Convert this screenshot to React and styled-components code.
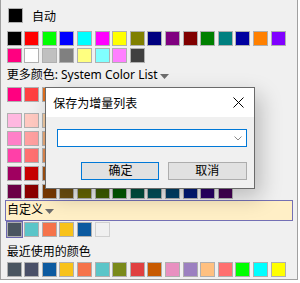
import React from 'react';
import styled, { createGlobalStyle } from 'styled-components';

const GlobalStyle = createGlobalStyle`
  html, body {
    margin: 0;
    padding: 0;
    background: #ffffff;
  }
  body {
    font-family: "Noto Sans", "Noto Sans CJK SC", sans-serif;
    font-size: 12px;
    color: #000;
  }
`;

// palette data
const standard = [
  '#000000', '#ff0000', '#00ff00', '#0000ff', '#00ffff', '#ff00ff', '#ffff00', '#808000',
  '#000080', '#800080', '#800000', '#008000', '#008080', '#0000a0', '#ff8000', '#8000ff',
  '#ff0080', '#ffffff', '#c0c0c0', '#808080', '#ffff80', '#80ffff', '#ff80ff', '#404040',
];

const baseRow = [
  '#ff0080', '#ff4040', '#e07020', '#c8a000', '#a0a000', '#60a000', '#00a000',
  '#00a070', '#00a0a0', '#0070c0', '#0000c0', '#6000c0', '#a000a0',
];

const shadeRows = [
  ['#ffb8e0', '#ffc8c0', '#f0c8a0', '#f0e0a0', '#f0f0a0', '#d0f0a0', '#b0f0b0', '#a0f0d8', '#a0f0f0', '#a0d0f0', '#a0a0f0', '#d0a0f0', '#f0a0f0'],
  ['#ff80c8', '#ffa0a0', '#e8a878', '#e8c870', '#e0e070', '#b0e070', '#80e080', '#70e0b8', '#70e0e0', '#70b0e0', '#7070e0', '#b070e0', '#e070e0'],
  ['#ff40a8', '#ff7070', '#e08850', '#e0b040', '#d0d040', '#90d040', '#40d040', '#40d098', '#40d0d0', '#4090d0', '#4040d0', '#9040d0', '#d040d0'],
  ['#a00060', '#c80000', '#a05010', '#907010', '#808000', '#508000', '#008000', '#007050', '#007078', '#005090', '#002090', '#400090', '#600070'],
  ['#6b0046', '#8b0000', '#7a3800', '#6e5010', '#686800', '#3e5e00', '#005a00', '#005040', '#00505a', '#004068', '#001a78', '#2a0068', '#440055'],
];

const custom = ['#4a5560', '#5bc5c8', '#f5734a', '#f8c21a', '#0c5aa0'];

const recent = [
  '#4a5560', '#4a5068', '#0c5aa0', '#f8c21a', '#f5734a', '#5bc5c8', '#7a8a1a', '#e04040',
  '#c85a00', '#e890c0', '#9c80c0', '#ffc080', '#ff7070', '#00ff00', '#00ffff', '#ffff00',
];

const Panel = styled.div`
  position: relative;
  box-sizing: border-box;
  width: 298px;
  height: 280px;
  background: #f0f0f0;
  border: 1px solid #a0a0a0;
  border-top: none;
  padding: 0 0 0 5.7px;
  overflow: hidden;
`;

const AutoRow = styled.div`
  display: flex;
  align-items: center;
  gap: 8.7px;
  padding: 8.3px 0 0 1.6px;
  height: 15px;
`;

const Grid = styled.div`
  display: grid;
  grid-template-columns: repeat(${(p) => p.$cols || 16}, 15px);
  gap: 2.6px;
  margin-top: ${(p) => p.$top || 0}px;
`;

const Swatch = styled.div`
  box-sizing: border-box;
  width: 15px;
  height: 15px;
  background: ${(p) => p.$c};
  border: 1px solid ${(p) => (p.$empty ? '#d0d0d0' : '#b0b0b0')};
  outline: ${(p) => (p.$selected ? '1.2px solid #6c68b0' : 'none')};
  outline-offset: 0.6px;
`;

const Heading = styled.div`
  display: flex;
  align-items: center;
  height: ${(p) => p.$h || 24}px;
  margin-top: ${(p) => p.$top || 0}px;
  line-height: 1;
  white-space: nowrap;
`;

const CustomBar = styled.div`
  box-sizing: border-box;
  display: flex;
  align-items: center;
  height: 21px;
  width: 288.6px;
  margin: 1.3px 0 0 -2px;
  padding-left: 1.3px;
  background: #ffefc6;
  border: 1px solid #7470b4;
  line-height: 1;
`;

const Caret = styled.svg`
  width: 9px;
  height: 5px;
  margin: 3px 0 0 2px;
  flex: none;
`;

const Dialog = styled.div`
  position: absolute;
  left: 44px;
  top: 87px;
  width: 210px;
  height: 102px;
  box-sizing: border-box;
  border: 1px solid #6a6a6a;
  background: #f0f0f0;
  box-shadow: 6px 8px 20px rgba(0, 0, 0, 0.22);
  display: flex;
  flex-direction: column;
`;

const TitleBar = styled.div`
  display: flex;
  align-items: center;
  justify-content: space-between;
  height: 29px;
  background: #fff;
  padding: 0 10px 0 7.3px;
  flex: none;
`;

const Body = styled.div`
  padding: 12px 7px 0 11.3px;
`;

const Combo = styled.div`
  box-sizing: border-box;
  display: flex;
  align-items: center;
  justify-content: flex-end;
  width: 189.4px;
  height: 18px;
  background: #fff;
  border: 1px solid #0078d7;
  padding-right: 4px;
`;

const Buttons = styled.div`
  display: flex;
  justify-content: flex-end;
  gap: 8.3px;
  margin-top: 15.3px;
  width: 189.4px;
`;

const Button = styled.div`
  box-sizing: border-box;
  display: flex;
  align-items: center;
  justify-content: center;
  width: ${(p) => p.$w}px;
  height: 18px;
  background: #e1e1e1;
  border: 1px solid ${(p) => (p.$primary ? '#0078d7' : '#adadad')};
  line-height: 1;
`;

const DownCaret = () => (
  <Caret viewBox="0 0 9 5">
    <path d="M0 0 H9 L4.5 5 Z" fill="#6d6d6d" />
  </Caret>
);

export default function App() {
  return (
    <>
      <GlobalStyle />
      <Panel>
        <AutoRow>
          <Swatch $c="#000000" />
          <span>自动</span>
        </AutoRow>
        <Grid $top={7.4}>
          {standard.map((c, i) => (
            <Swatch key={i} $c={c} />
          ))}
        </Grid>
        <Heading>
          更多颜色: System Color List
          <DownCaret />
        </Heading>
        <Grid $cols={13}>
          {baseRow.map((c, i) => (
            <Swatch key={i} $c={c} />
          ))}
        </Grid>
        <Grid $cols={13} $top={11}>
          {shadeRows.flat().map((c, i) => (
            <Swatch key={i} $c={c} />
          ))}
        </Grid>
        <CustomBar>
          自定义
          <DownCaret />
        </CustomBar>
        <Grid $top={1.4}>
          {custom.map((c, i) => (
            <Swatch key={i} $c={c} $selected={i === 0} />
          ))}
          <Swatch $c="#f0f0f0" $empty />
        </Grid>
        <Heading $h={20} $top={4.7}>
          最近使用的颜色
        </Heading>
        <Grid>
          {recent.map((c, i) => (
            <Swatch key={i} $c={c} />
          ))}
        </Grid>

        <Dialog>
          <TitleBar>
            <span>保存为增量列表</span>
            <svg width="11" height="11" viewBox="0 0 11 11">
              <path d="M0.5 0.5 L10.5 10.5 M10.5 0.5 L0.5 10.5" stroke="#000" strokeWidth="1" />
            </svg>
          </TitleBar>
          <Body>
            <Combo>
              <svg width="8" height="5" viewBox="0 0 8 5">
                <path d="M0.5 0.5 L4 4 L7.5 0.5" stroke="#8a8a8a" strokeWidth="1" fill="none" />
              </svg>
            </Combo>
            <Buttons>
              <Button $w={78} $primary>确定</Button>
              <Button $w={79}>取消</Button>
            </Buttons>
          </Body>
        </Dialog>
      </Panel>
    </>
  );
}
